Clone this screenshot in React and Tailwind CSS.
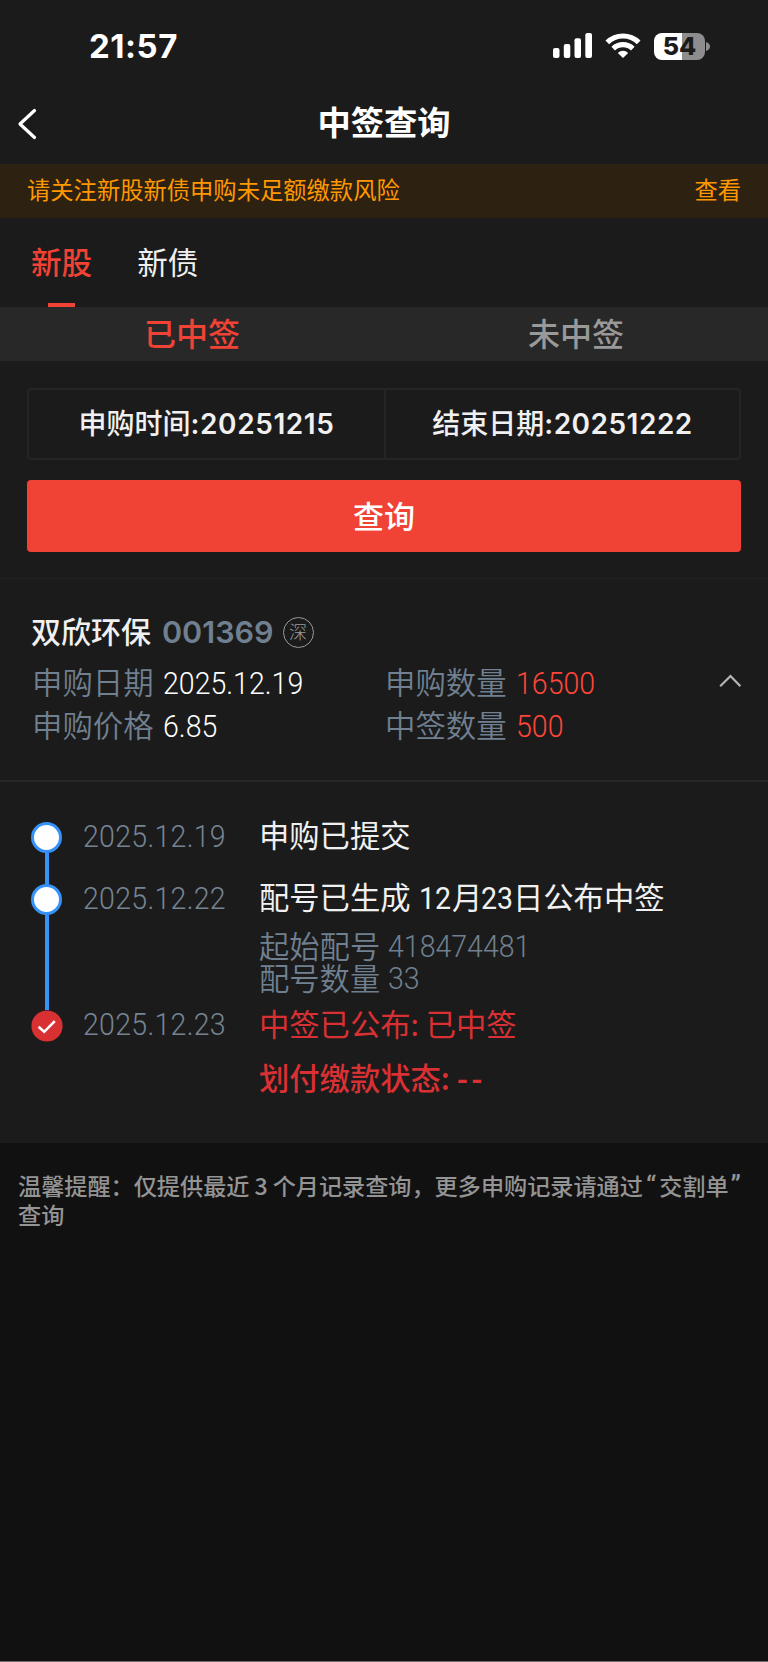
function Num({ children, className = '' }) {
  return (
    <span className={`inline-block origin-left scale-x-[0.92] font-['Roboto','Noto_Sans_CJK_SC',sans-serif] text-[31px] leading-[32px] whitespace-nowrap ${className}`}>
      {children}
    </span>
  );
}

function StatusBar() {
  return (
    <div className="flex h-[92px] items-center justify-between pr-[58px] pl-[89px]">
      <span className="font-['Inter',sans-serif] text-[33px] leading-[40px] font-bold tracking-[0.5px] text-white">21:57</span>
      <div className="flex items-center">
        <svg className="h-[26px] w-[40px]" viewBox="0 0 40 26" fill="#fff">
          <rect x="0" y="15" width="6.5" height="10" rx="2" />
          <rect x="10.8" y="11" width="6.5" height="14" rx="2" />
          <rect x="21.5" y="5.2" width="6.5" height="19.8" rx="2" />
          <rect x="32.3" y="0" width="6.7" height="25" rx="2" />
        </svg>
        <svg className="ml-[12px] h-[26px] w-[36px]" viewBox="0 0 36 26" fill="none" stroke="#fff" strokeWidth="5.2">
          <path d="M2.3 9.4 A22.5 22.5 0 0 1 33.7 9.4" />
          <path d="M8.2 15.6 A14.2 14.2 0 0 1 27.8 15.6" />
          <path d="M18 25 L12.8 20 A7.4 7.4 0 0 1 23.2 20 Z" fill="#fff" stroke="none" />
        </svg>
        <div className="ml-[13px] flex h-[27px] w-[51px] items-center justify-center rounded-[8px] bg-linear-to-r from-white from-54% to-[#8d8d8d] to-54% font-['Inter',sans-serif] text-[25px] leading-none font-extrabold text-[#1b1b1b]">
          54
        </div>
        <svg className="ml-[1px] h-[9px] w-[4px]" viewBox="0 0 4 9" fill="#8d8d8d">
          <path d="M0 0 Q4 1.2 4 4.5 T0 9 Z" />
        </svg>
      </div>
    </div>
  );
}

function Header() {
  return (
    <div className="grid h-[72px] grid-cols-[1fr_auto_1fr] items-start">
      <svg className="mt-[16px] ml-[17px] h-[32px] w-[20px]" viewBox="0 0 20 32" fill="none" stroke="#fff" strokeWidth="3.2" strokeLinecap="round" strokeLinejoin="round">
        <path d="M17.5 2.5 L3 16 L17.5 29.5" />
      </svg>
      <h1 className="mt-[9px] text-[33.3px] leading-[40px] font-bold text-white">中签查询</h1>
    </div>
  );
}

function Node({ done }) {
  if (done) {
    return (
      <svg className="size-[32px]" viewBox="0 0 32 32" fill="none">
        <circle cx="16" cy="16" r="15.6" fill="#d93033" />
        <path d="M7.6 16.8 L13.2 21.8 L23.8 11.2" stroke="#fff" strokeWidth="2.6" />
      </svg>
    );
  }
  return <span className="size-[31px] rounded-full border-[3.4px] border-[#3692fb] bg-white" />;
}

function Step({ date, done, last, className, children }) {
  return (
    <div className={`flex ${className}`}>
      <div className="flex w-[31px] flex-col items-center">
        <Node done={done} />
        {!last && <span className="w-[4px] flex-1 bg-[#3692fb]" />}
      </div>
      <div className="ml-[21px] flex w-[176px] items-start text-[#758493]">
        <Num className="-mt-[1px] font-light tracking-[0.3px]">{date}</Num>
      </div>
      <div className="-mt-[9px] flex-1">{children}</div>
    </div>
  );
}

function Field({ label, value, red }) {
  return (
    <div className="flex h-[43px] items-center">
      <span className="w-[131px] text-[30.4px] leading-[43px] font-[350] text-[#708090]">{label}</span>
      <Num className={red ? 'mt-[4px] font-light text-[#ff4638]' : 'mt-[4px] font-light text-white'}>{value}</Num>
    </div>
  );
}

export default function App() {
  return (
    <div className="flex h-[1662px] w-[768px] flex-col border-b border-[#6f6b6d] bg-[#111111] font-['Noto_Sans_CJK_SC',sans-serif]">
      <div className="flex h-[1143px] flex-none flex-col bg-[#1b1b1b]">
        <StatusBar />
        <Header />

        <div className="flex h-[54px] items-start justify-between bg-[#2d2111] px-[27px] text-[23.3px] leading-[50px] text-[#ff9800]">
          <span>请关注新股新债申购未足额缴款风险</span>
          <span>查看</span>
        </div>

        <div className="flex h-[89px] items-start gap-[45px] pl-[31px] text-[30.6px]">
          <div className="flex h-[90px] flex-col items-center justify-between">
            <span className="mt-[20px] leading-[46px] font-medium text-[#f04235]">新股</span>
            <span className="h-[5px] w-[27px] bg-[#f04235]" />
          </div>
          <span className="mt-[20px] leading-[46px] text-[#f0f0f0]">新债</span>
        </div>

        <div className="grid h-[54px] grid-cols-2 bg-[#282828] text-center text-[32px] leading-[50px]">
          <span className="font-medium text-[#f04235]">已中签</span>
          <span className="font-medium text-[#999999]">未中签</span>
        </div>

        <div className="px-[27px] pt-[27px]">
          <div className="flex h-[72px] rounded-[4px] border-2 border-[#252525] text-center font-['Inter','Noto_Sans_CJK_SC',sans-serif] text-[28px] leading-[68px] font-medium text-[#f0f0f0]">
            <div className="w-[357px] border-r-2 border-[#252525]">申购时间<span className="font-semibold tracking-[0.6px]">:20251215</span></div>
            <div className="flex-1">结束日期<span className="font-semibold tracking-[0.5px]">:20251222</span></div>
          </div>
          <div className="mt-[20px] h-[72px] rounded-[4px] bg-[#f04235] text-center text-[31px] leading-[69px] font-medium text-white">查询</div>
        </div>

        <div className="mt-[26px] h-[202px] border-t border-[#222222] pr-[27px] pl-[31px]">
          <div className="mt-[31px] flex h-[44px] items-center">
            <span className="-mt-[5px] text-[30px] leading-[44px] font-medium text-[#f0f0f0]">双欣环保</span>
            <span className="ml-[11px] font-['Inter',sans-serif] text-[30.5px] leading-[44px] font-semibold text-[#708090]">001369</span>
            <span className="ml-[9px] size-[31px] rounded-full border border-[#999999] text-center text-[18px] leading-[27px] font-light text-[#999999]">深</span>
          </div>
          <div className="mt-[6px] flex">
            <div className="ml-[1px] w-[353px]">
              <Field label="申购日期" value="2025.12.19" />
              <Field label="申购价格" value="6.85" />
            </div>
            <div className="flex-1">
              <Field label="申购数量" value="16500" red />
              <Field label="中签数量" value="500" red />
            </div>
            <svg className="mt-[14px] h-[14px] w-[22px]" viewBox="0 0 22 14" fill="none" stroke="#b5b5b5" strokeWidth="2.2">
              <path d="M1.2 12.2 L11.5 2 L21.4 12.2" />
            </svg>
          </div>
        </div>

        <div className="flex-1 border-t-2 border-[#282828] pt-[40px] pl-[31px] text-[30.3px]">
          <Step date="2025.12.19" className="h-[62px]">
            <div className="h-[43px] leading-[43px] text-[#f0f0f0]">申购已提交</div>
          </Step>
          <Step date="2025.12.22" className="h-[126px]">
            <div className="flex h-[43px] text-[#f0f0f0]">
              <span className="w-[160px] leading-[43px]">配号已生成</span>
              <Num className="mt-[8px] w-[33px]">12</Num>
              <span className="w-[29px] leading-[43px]">月</span>
              <Num className="mt-[8px] w-[32px]">23</Num>
              <span className="leading-[43px]">日公布中签</span>
            </div>
            <div className="mt-[11px] text-[#708090]">
              <div className="flex h-[32px] gap-[8px]">
                <span className="leading-[32px] font-[350]">起始配号</span>
                <Num className="mt-[2px] font-light">418474481</Num>
              </div>
              <div className="flex h-[32px] gap-[8px]">
                <span className="leading-[32px] font-[350]">配号数量</span>
                <Num className="mt-[2px] font-light">33</Num>
              </div>
            </div>
          </Step>
          <Step date="2025.12.23" done last className="">
            <div className="mt-[1px] leading-[43px] text-[#d93033]">中签已公布: 已中签</div>
            <div className="mt-[11px] leading-[43px] font-medium text-[#d93033]">
              划付缴款状态: <span className="font-bold tracking-[3.5px]">--</span>
            </div>
          </Step>
        </div>
      </div>

      <p className="px-[18px] pt-[28px] text-[23.15px] leading-[29px] font-medium whitespace-nowrap text-[#949494]">
        温馨提醒：仅提供最近<span className="mx-[5px]">3</span>个月记录查询，更多申购记录请通过
        <span className="mr-[3px] ml-[3px] font-['Roboto',sans-serif] text-[27px] leading-none">“</span>交割单<span className="ml-[2px] font-['Roboto',sans-serif] text-[27px] leading-none">”</span>
        <br />
        查询
      </p>
    </div>
  );
}
